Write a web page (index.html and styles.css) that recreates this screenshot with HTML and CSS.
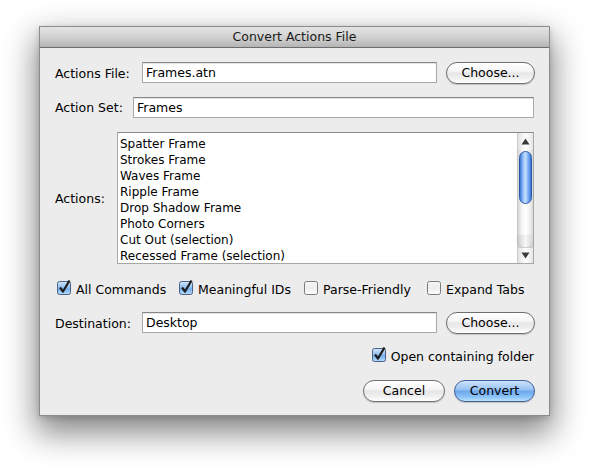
FILE: index.html
```html
<!DOCTYPE html>
<html>
<head>
<meta charset="utf-8">
<link rel="stylesheet" href="styles.css">
</head>
<body>
<div class="stage">
  <div class="window">
    <div class="titlebar">Convert Actions File</div>
    <div class="content">
      <div class="row r-file">
        <span class="lbl lbl-file">Actions File:</span>
        <div class="field f-file">Frames.atn</div>
        <div class="btn btn-choose">Choose...</div>
      </div>
      <div class="row r-set">
        <span class="lbl lbl-set">Action Set:</span>
        <div class="field f-set">Frames</div>
      </div>
      <div class="row r-actions">
        <span class="lbl lbl-actions">Actions:</span>
        <div class="list">
          <ul class="items">
            <li>Spatter Frame</li>
            <li>Strokes Frame</li>
            <li>Waves Frame</li>
            <li>Ripple Frame</li>
            <li>Drop Shadow Frame</li>
            <li>Photo Corners</li>
            <li>Cut Out (selection)</li>
            <li>Recessed Frame (selection)</li>
          </ul>
          <div class="scrollbar">
            <div class="arrow arrow-up"><svg width="9" height="7" viewBox="0 0 9 7"><path d="M4.5 0.5 L8.5 6.5 L0.5 6.5 Z" fill="#3a3a3a"/></svg></div>
            <div class="track">
              <div class="thumb"></div>
              <div class="track-end"></div>
            </div>
            <div class="arrow arrow-down"><svg width="9" height="7" viewBox="0 0 9 7"><path d="M0.5 0.5 L8.5 0.5 L4.5 6.5 Z" fill="#3a3a3a"/></svg></div>
          </div>
        </div>
      </div>
      <div class="row r-checks">
        <span class="check"><svg class="cb" width="15" height="15" viewBox="0 0 15 15"><defs><linearGradient id="gb" x1="0" y1="0" x2="0" y2="1"><stop offset="0" stop-color="#d2e6fb"/><stop offset="0.5" stop-color="#8dbdf0"/><stop offset="0.55" stop-color="#74aeec"/><stop offset="1" stop-color="#b9dcfb"/></linearGradient></defs><rect x="0.5" y="1.5" width="13" height="13" rx="2" fill="url(#gb)" stroke="#4d6186"/><path d="M3 7.5 L6 11.5 L12.5 0.5" fill="none" stroke="#1d1d1d" stroke-width="2.2" stroke-linejoin="round"/></svg><span class="ct">All Commands</span></span>
        <span class="check"><svg class="cb" width="15" height="15" viewBox="0 0 15 15"><rect x="0.5" y="1.5" width="13" height="13" rx="2" fill="url(#gb)" stroke="#4d6186"/><path d="M3 7.5 L6 11.5 L12.5 0.5" fill="none" stroke="#1d1d1d" stroke-width="2.2" stroke-linejoin="round"/></svg><span class="ct">Meaningful IDs</span></span>
        <span class="check"><svg class="cb" width="15" height="15" viewBox="0 0 15 15"><defs><linearGradient id="gw" x1="0" y1="0" x2="0" y2="1"><stop offset="0" stop-color="#f6f6f6"/><stop offset="0.5" stop-color="#ececec"/><stop offset="1" stop-color="#ffffff"/></linearGradient></defs><rect x="0.5" y="1.5" width="13" height="13" rx="2" fill="url(#gw)" stroke="#7a7a7a"/></svg><span class="ct">Parse-Friendly</span></span>
        <span class="check"><svg class="cb" width="15" height="15" viewBox="0 0 15 15"><rect x="0.5" y="1.5" width="13" height="13" rx="2" fill="url(#gw)" stroke="#7a7a7a"/></svg><span class="ct">Expand Tabs</span></span>
      </div>
      <div class="row r-dest">
        <span class="lbl lbl-dest">Destination:</span>
        <div class="field f-dest">Desktop</div>
        <div class="btn btn-choose">Choose...</div>
      </div>
      <div class="row r-open">
        <span class="check"><svg class="cb" width="15" height="15" viewBox="0 0 15 15"><rect x="0.5" y="1.5" width="13" height="13" rx="2" fill="url(#gb)" stroke="#4d6186"/><path d="M3 7.5 L6 11.5 L12.5 0.5" fill="none" stroke="#1d1d1d" stroke-width="2.2" stroke-linejoin="round"/></svg><span class="ct">Open containing folder</span></span>
      </div>
      <div class="row r-buttons">
        <div class="btn btn-cancel">Cancel</div>
        <div class="btn btn-convert">Convert</div>
      </div>
    </div>
  </div>
</div>
</body>
</html>
```

FILE: styles.css
```css
html, body {
  margin: 0;
  padding: 0;
  background: #ffffff;
}

.stage {
  box-sizing: border-box;
  min-height: 470px;
  padding: 26px 0 0 39px;
  font-family: "DejaVu Sans", sans-serif;
  font-size: 12.5px;
  color: #000;
}

.window {
  width: 511px;
  box-sizing: border-box;
  border: 1px solid #8c8c8c;
  background: #ececec;
  box-shadow: 0 14px 30px 3px rgba(0, 0, 0, 0.48), 0 2px 6px rgba(0, 0, 0, 0.15);
}

.titlebar {
  height: 20px;
  border-bottom: 1px solid #6d6d6d;
  background: linear-gradient(to bottom, #e4e4e4 0%, #d2d2d2 50%, #b5b5b5 100%);
  text-align: center;
  line-height: 20px;
  color: #1a1a1a;
}

.content {
  display: flex;
  flex-direction: column;
  padding: 14px 14px 13px 15px;
}

.row {
  display: flex;
  align-items: center;
}

.lbl {
  flex: none;
  white-space: nowrap;
}

.lbl-file, .lbl-dest { width: 87px; }
.lbl-set { width: 78px; }
.lbl-actions { width: 62px; }

.field {
  box-sizing: border-box;
  height: 21px;
  background: #fff;
  border: 1px solid #a9a9a9;
  border-top-color: #878787;
  box-shadow: inset 0 1px 0 #e4e4e4;
  padding: 0 3px;
  line-height: 19px;
  white-space: nowrap;
}

.f-file, .f-dest { width: 295px; }
.f-set { width: 401px; }

.r-file { height: 22px; }
.r-set { margin-top: 13px; height: 21px; }
.r-actions { margin-top: 14px; height: 132px; }
.r-checks { margin-top: 16px; height: 14px; }
.r-dest { margin-top: 18px; height: 22px; }
.r-open { margin-top: 14px; height: 14px; justify-content: flex-end; padding-right: 1px; }
.r-buttons { margin-top: 18px; height: 22px; justify-content: flex-end; }

.r-file .field, .r-dest .field { align-self: flex-start; }

.btn {
  box-sizing: border-box;
  height: 22px;
  border: 1px solid #6f6f6f;
  border-radius: 11px;
  background: linear-gradient(to bottom, #ffffff 0%, #f6f6f6 40%, #e6e6e6 52%, #efefef 75%, #ffffff 100%);
  box-shadow: 0 1px 1px rgba(0, 0, 0, 0.18);
  text-align: center;
  line-height: 20px;
  white-space: nowrap;
}

.btn-choose { width: 89px; margin-left: 9px; }
.btn-cancel { width: 82px; }
.btn-convert {
  width: 81px;
  margin-left: 9px;
  border-color: #41609a;
  background: linear-gradient(to bottom, #cde3fb 0%, #98c3f3 42%, #6ea7ed 52%, #8cc4f8 80%, #bde3fe 100%);
}

.list {
  box-sizing: border-box;
  width: 417px;
  height: 132px;
  border: 1px solid #a7a7a7;
  border-top-color: #8a8a8a;
  background: #fff;
  display: flex;
  overflow: hidden;
}

.items {
  flex: 1;
  list-style: none;
  margin: 0;
  padding: 3px 0 0 2px;
  font-size: 12px;
  line-height: 16px;
  overflow: hidden;
}

.items li {
  white-space: nowrap;
}

.scrollbar {
  flex: none;
  width: 15px;
  border-left: 1px solid #c9c9c9;
  display: flex;
  flex-direction: column;
  background: linear-gradient(to right, #d6d6d6 0%, #f4f4f4 25%, #ffffff 50%, #f2f2f2 75%, #d9d9d9 100%);
}

.arrow {
  display: flex;
  justify-content: center;
  align-items: center;
  flex: none;
}

.arrow-up { height: 17px; background: linear-gradient(to right, #e2e2e2, #ffffff 50%, #e6e6e6); }
.arrow-down { height: 15px; border-top: 1px solid #cfcfcf; background: linear-gradient(to right, #e2e2e2, #ffffff 50%, #e6e6e6); }

.track {
  flex: 1;
  display: flex;
  flex-direction: column;
  align-items: center;
}

.thumb {
  box-sizing: border-box;
  width: 13px;
  height: 53px;
  margin-top: 1px;
  border: 1px solid #2c57a8;
  border-radius: 7px;
  background: linear-gradient(to right, #3d77d6 0%, #7fb0f2 22%, #c6e0fd 45%, #a6cdf9 60%, #5f98ea 85%, #3a72d2 100%);
}

.track-end {
  margin-top: auto;
  width: 15px;
  height: 12px;
  border-radius: 0 0 7px 7px;
  background: linear-gradient(to right, #cfcfcf, #f7f7f7 50%, #d4d4d4);
  box-shadow: 0 1px 2px rgba(0, 0, 0, 0.25);
}

.r-checks {
  display: grid;
  grid-template-columns: 122px 125px 123px auto;
  padding-left: 2px;
}

.check {
  display: inline-flex;
  align-items: center;
  white-space: nowrap;
}

.ct {
  padding-top: 2px;
}

.cb {
  flex: none;
  margin-right: 4px;
  margin-top: -2px;
  overflow: visible;
}
```
